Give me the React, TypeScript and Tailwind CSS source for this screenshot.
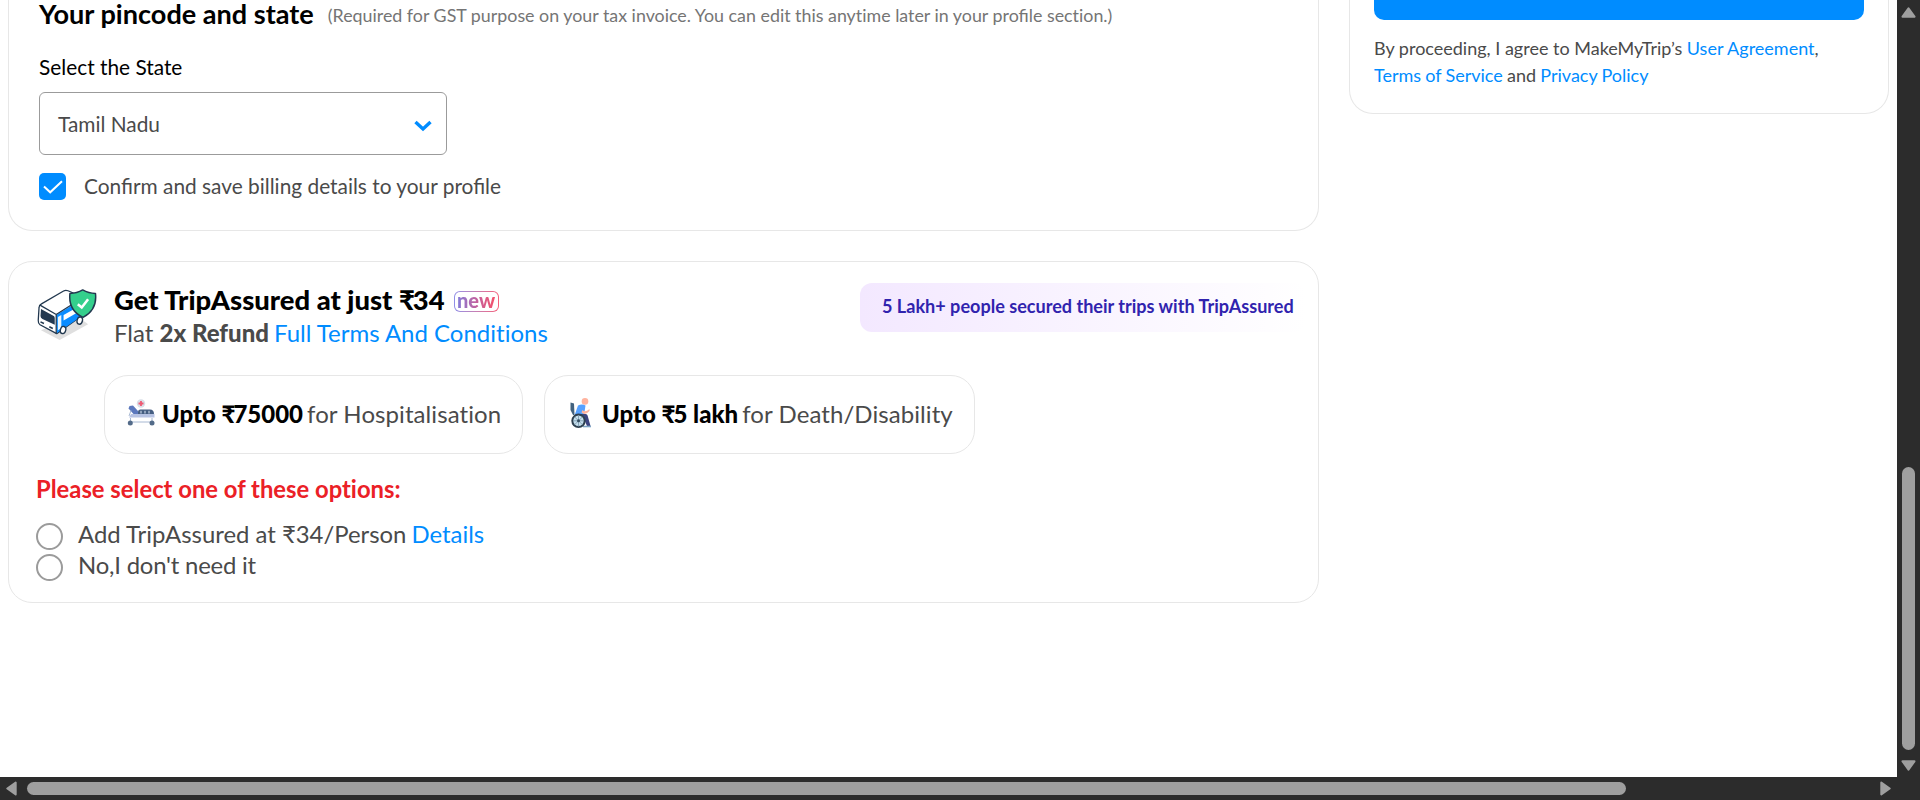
import type { ReactNode } from "react";

function BusShieldIcon() {
  return (
    <svg className="h-[53px] w-[61px] shrink-0" viewBox="0 0 62 54" fill="none">
      <path d="M4 43 L23 53 L52 37 L40 28Z" fill="#dfdfdf" />
      <path d="M2 20 Q2 17.500 4.500 16.200 L27 3 Q29 1.800 31.500 2.800 L46 9 V28 L20 46.500 L3 37.500 Q1 36 1.200 33Z" fill="#fff" stroke="#22384f" strokeWidth="1.300" strokeLinejoin="round" />
      <path d="M19.500 27.500 L45 12 V29 L20 46Z" fill="#0a8cff" />
      <path d="M27 27.500 L42 19 V24.500 L27 33Z" fill="#fff" />
      <path d="M21.200 29.500 L24.700 27.500 V41 L21.200 43Z" fill="#e8f6ff" />
      <path d="M3 17.500 L19.500 27 V46.500 M19.500 27 L36 16.500" stroke="#22384f" strokeWidth="1.300" strokeLinejoin="round" />
      <path d="M4 21.500 L17 28.500 Q18 29 18 30.500 V37.500 L5.500 31.500 Q3.500 30.500 3.500 28.500Z" fill="#22384f" />
      <path d="M3.500 34.500 L7 36.200 M12.500 39.500 L16 41.200" stroke="#22384f" strokeWidth="1.600" />
      <ellipse cx="26.500" cy="42.800" rx="2.700" ry="3.700" transform="rotate(15 26.500 42.800)" fill="#fff" stroke="#22384f" strokeWidth="1.400" />
      <ellipse cx="43.500" cy="33.200" rx="2.700" ry="3.700" transform="rotate(15 43.500 33.200)" fill="#fff" stroke="#22384f" strokeWidth="1.400" />
      <path d="M46.500 2 Q52.500 5.500 59.500 5.500 Q61.500 22 46.800 30 Q31.500 22.500 33.500 5.500 Q40.500 5.500 46.500 2Z" fill="#34cf8c" stroke="#22384f" strokeWidth="1.500" strokeLinejoin="round" />
      <path d="M41.500 16.500 L45.500 19.800 L52 11.500" stroke="#fff" strokeWidth="2.600" />
    </svg>
  );
}

function HospitalBedIcon() {
  return (
    <svg className="h-[30px] w-[30px] shrink-0" viewBox="0 0 30 30" fill="none">
      <circle cx="15" cy="5.500" r="4.200" fill="#d9dfe8" />
      <path d="M15 3 V8 M12.500 5.500 H17.500" stroke="#ee5a72" strokeWidth="1.800" />
      <path d="M3.500 8 L7 7.500 L12 13 V16 H7.500 L2.500 10.500Z" fill="#5b78bd" />
      <path d="M12 16 V14 Q12 11.500 14.500 11.500 H24 Q28 11.500 28 16Z" fill="#455e82" />
      <path d="M15 12.800 V15.500 M19 12.800 V15.500 M23 12.800 V15.500" stroke="#dce7f6" />
      <path d="M5 16 H28.500 V19.500 H3Z" fill="#b7c3e3" />
      <path d="M5 12.500 L3 18 M4.500 20 V23.500 M26 20 V23.500 M4.500 24 H26" stroke="#a7b8d2" />
      <circle cx="4.300" cy="25" r="2.500" fill="#536b89" />
      <circle cx="26" cy="25" r="2.500" fill="#536b89" />
    </svg>
  );
}

function WheelchairIcon() {
  return (
    <svg className="h-[30px] w-[30px] shrink-0" viewBox="0 0 30 30" fill="none">
      <path d="M4.500 4.500 L8 5.500 L8.500 17 H7 L4.500 12Z" fill="#42627f" />
      <circle cx="19" cy="3.400" r="3.300" fill="#ffb39e" />
      <path d="M12 7.500 Q16 5.500 19.500 7.500 L18 17.500 H8.500Z" fill="#57a1ff" />
      <path d="M16.500 12 Q19 15 23.500 11 V13 Q19 18 15.500 14.500Z" fill="#ffb39e" />
      <path d="M11 16 H19.500 Q21.500 16 22 19 L24.500 28 H21 L17.500 20 H11Z" fill="#3c4380" />
      <path d="M17 28.500 H25" stroke="#7da3c4" strokeWidth="1.600" />
      <circle cx="12.500" cy="22.800" r="6.200" fill="#c5dfee" stroke="#2e4050" strokeWidth="2" />
      <path d="M12.500 17 V28.500 M7 22.800 H18 M8.500 18.800 L16.500 26.800 M16.500 18.800 L8.500 26.800" stroke="#7896aa" strokeWidth=".8" />
      <circle cx="12.500" cy="22.800" r="1.500" fill="#344d61" />
    </svg>
  );
}

function NewBadge() {
  return (
    <span className="flex h-[21px] w-[45px] rounded-md bg-linear-to-r from-[#8f8fe8] to-[#f5607a] p-px">
      <span className="flex flex-1 items-center justify-center rounded-[5px] bg-white">
        <span className="-mt-[4px] bg-linear-to-r from-[#8079d8] via-[#c0609f] to-[#f5506a] bg-clip-text text-[20px] leading-[20px] font-black text-transparent">
          new
        </span>
      </span>
    </span>
  );
}

function Link({ children }: { children: ReactNode }) {
  return <a className="text-[#008cff]">{children}</a>;
}

function Rupee() {
  return <span className="tracking-[-2px]">₹</span>;
}

function BenefitPill({ icon, amount, label, width }: { icon: ReactNode; amount: string; label: string; width: string }) {
  return (
    <div className={`flex h-[79px] items-center rounded-3xl border border-[#e7e7e7] pl-[21px] text-2xl leading-[29px] ${width}`}>
      <span className="pb-[3px]">{icon}</span>
      <span className="ml-1.5 pb-0.5 whitespace-nowrap">
        <b className="font-black text-black">
          Upto <Rupee />
          {amount}
        </b>
        <span className="ml-1 tracking-[0.08px]">{label}</span>
      </span>
    </div>
  );
}

function RadioOption({ children }: { children: ReactNode }) {
  return (
    <label className="flex h-[31px] items-start">
      <span className="mt-[3px] size-[27px] rounded-full border-2 border-[#9b9b9b]" />
      <span className="ml-[15px] text-[23.9px] leading-[27px]">{children}</span>
    </label>
  );
}

function BillingCard() {
  return (
    <section className="h-[231px] rounded-b-3xl border border-t-0 border-[#e7e7e7] pl-[30px]">
      <div className="flex items-start">
        <h2 className="text-[27.1px] leading-[27px] font-bold text-black">Your pincode and state</h2>
        <span className="mt-0.5 ml-3.5 text-[17.84px] leading-[27px] text-[#757575]">
          (Required for GST purpose on your tax invoice. You can edit this any<span className="[font-variant-ligatures:none]">ti</span>me later in your profile
          <span className="[font-variant-ligatures:none]"> section.)</span>
        </span>
      </div>
      <p className="mt-[26px] text-[20.85px] leading-6 text-black">Select the State</p>
      <div className="mt-[13px] flex h-[63px] w-[408px] items-center justify-between rounded-md border border-[#9b9b9b] pr-[14px] pl-[18px] text-[20.85px] leading-6">
        <span>Tamil Nadu</span>
        <svg className="mt-1 h-3 w-[18px]" viewBox="0 0 18 12" fill="none">
          <path d="M1.500 2 L9 9 L16.500 2" stroke="#008cff" strokeWidth="3.400" />
        </svg>
      </div>
      <label className="mt-[18px] flex items-start">
        <span className="flex size-[27px] items-center justify-center rounded-[5px] bg-[#008cff]">
          <svg className="h-[14px] w-5" viewBox="0 0 20 14" fill="none">
            <path d="M1 6.500 L7.200 12.300 L19 1.200" stroke="#fff" strokeWidth="2" />
          </svg>
        </span>
        <span className="ml-[18px] text-[20.87px] leading-[25px]">Confirm and save billing details to your profile</span>
      </label>
    </section>
  );
}

function TripAssuredCard() {
  return (
    <section className="mt-[30px] h-[342px] rounded-3xl border border-[#e7e7e7] pl-[27px] [font-variant-ligatures:none]">
      <div className="flex items-start">
        <div className="mt-[26px] ml-px">
          <BusShieldIcon />
        </div>
        <div className="mt-6 ml-4 flex-1">
          <div className="flex items-center">
            <h2 className="text-[27.4px] leading-[27px] font-black text-black">
              Get TripAssured at just <Rupee />
              34
            </h2>
            <div className="mt-1 ml-[9px]">
              <NewBadge />
            </div>
          </div>
          <p className="text-2xl leading-[39px]">
            Flat <b className="font-black">2x Refund</b>
            <span className="ml-[5px]">
              <Link>Full Terms And Conditions</Link>
            </span>
          </p>
        </div>
        <div className="mt-[21px] mr-3 flex h-[49px] w-[446px] items-center rounded-xl bg-linear-to-r from-[#f3e8ff] to-white pb-[3px] pl-[22px] text-[18.07px] leading-[22px] font-bold whitespace-nowrap text-[#3023ae]">
          5 Lakh+ people secured their trips with TripAssured
        </div>
      </div>
      <div className="mt-[23px] ml-[68px] flex gap-[21px]">
        <BenefitPill width="w-[419px]" icon={<HospitalBedIcon />} amount="75000" label="for Hospitalisation" />
        <BenefitPill width="w-[431px]" icon={<WheelchairIcon />} amount="5 lakh" label="for Death/Disability" />
      </div>
      <p className="mt-[21px] mb-4 text-[23.8px] leading-[29px] font-bold text-[#eb2026]">Please select one of these options:</p>
      <RadioOption>
        Add TripAssured at ₹34/Person
        <span className="ml-[5px]">
          <Link>Details</Link>
        </span>
      </RadioOption>
      <RadioOption>
        <span className="tracking-[-0.2px]">No,I don't need it</span>
      </RadioOption>
    </section>
  );
}

function SummaryCard() {
  return (
    <aside className="h-[114px] w-[540px] rounded-b-3xl border border-t-0 border-[#e7e7e7] px-6">
      <div className="h-5 w-[490px] rounded-b-[10px] bg-[#008cff]" />
      <p className="mt-[15px] text-lg leading-[27px]">
        By proceeding, I agree to MakeMyTrip’s <Link>User Agreement</Link>,<br />
        <span className="[word-spacing:-0.4px]">
          <Link>Terms of Service</Link> and <Link>Privacy Policy</Link>
        </span>
      </p>
    </aside>
  );
}

function ScrollArrow({ className }: { className: string }) {
  return (
    <svg className={`h-[11px] w-[15px] shrink-0 ${className}`} viewBox="0 0 15 11">
      <path d="M7.500 1.300 L13.500 9.700 H1.500Z" fill="#9f9f9f" stroke="#9f9f9f" strokeWidth="2" strokeLinejoin="round" />
    </svg>
  );
}

export default function App() {
  return (
    <div className="flex h-[800px] w-[1920px] flex-col overflow-hidden bg-[#2c2c2c] font-['Lato','Noto_Sans',sans-serif] text-[#4a4a4a]">
      <div className="flex h-[777px]">
        <main className="flex w-[1897px] items-start bg-white pl-2">
          <div className="w-[1311px]">
            <BillingCard />
            <TripAssuredCard />
          </div>
          <div className="ml-[30px]">
            <SummaryCard />
          </div>
        </main>
        <div className="flex w-[23px] flex-col items-center pt-[7px]">
          <ScrollArrow className="" />
          <div className="mt-[449px] h-[283px] w-[13px] rounded-full bg-[#9f9f9f]" />
          <ScrollArrow className="mt-[10px] rotate-180" />
        </div>
      </div>
      <div className="flex h-[23px] items-center pl-1">
        <ScrollArrow className="-rotate-90" />
        <div className="ml-2 h-[13px] w-[1599px] rounded-full bg-[#9f9f9f]" />
        <ScrollArrow className="ml-[252px] rotate-90" />
      </div>
    </div>
  );
}
